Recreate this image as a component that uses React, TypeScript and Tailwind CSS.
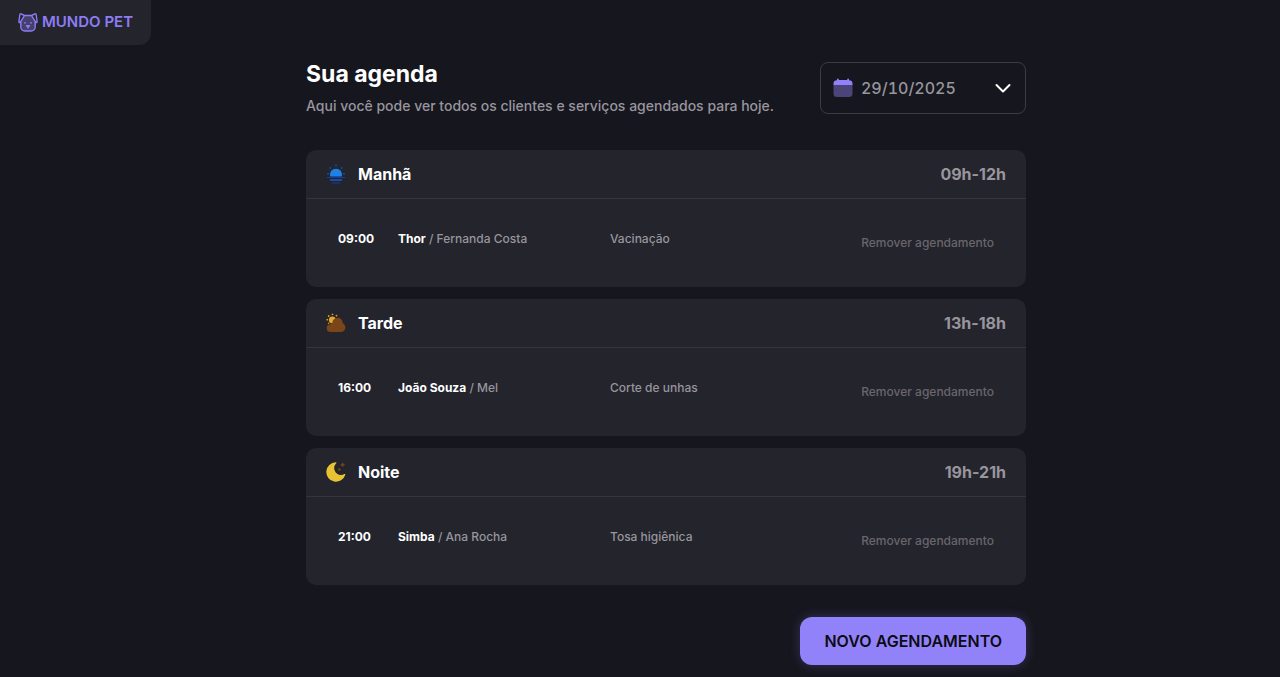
import React from "react";

type Appointment = { time: string; name: string; other: string; service: string };
type Period = { title: string; hours: string; icon: React.ReactNode; items: Appointment[] };

function DogIcon() {
  return (
    <svg viewBox="0 0 20 20" className="size-5" fill="none" stroke="#8e7cf5" strokeWidth="1.4" strokeLinejoin="round" strokeLinecap="round" aria-hidden="true">
      <path d="M6.500 2.500h7L17 8.500v5.500a4 4 0 0 1-4 4H7a4 4 0 0 1-4-4V8.500z" fill="#45416f" stroke="none" />
      <path d="M6.500 2.500h7M6.500 2.500 3 .9a.8.8 0 0 0-1.100.6L.9 8.500c-.1 1 .9 1.400 1.500.7zM13.500 2.500 17 .9a.8.8 0 0 1 1.100.6l1 7c.1 1-.9 1.400-1.500.7z" />
      <path d="M2.800 9v5a4 4 0 0 0 4 4h6.400a4 4 0 0 0 4-4V9M8.500 12.800h3L10 14.300zM10 14.300V15" />
      <circle cx="7" cy="9.800" r=".9" fill="#8e7cf5" stroke="none" />
      <circle cx="13" cy="9.800" r=".9" fill="#8e7cf5" stroke="none" />
    </svg>
  );
}

function CalendarIcon() {
  return (
    <svg viewBox="0 0 20 20" className="size-5" aria-hidden="true">
      <path d="M.5 7h19v8.500a3.500 3.500 0 0 1-3.500 3.500H4a3.500 3.500 0 0 1-3.500-3.500z" fill="#4a4578" />
      <path d="M.5 7V5.500A3.500 3.500 0 0 1 4 2.200V1.500a.8.8 0 0 1 1.800 0V2h8.400v-.5a.8.8 0 0 1 1.800 0v.7a3.500 3.500 0 0 1 3.500 3.300V7z" fill="#9282fa" />
    </svg>
  );
}

function SunriseIcon() {
  return (
    <svg viewBox="0 0 20 20" className="size-5" aria-hidden="true">
      <path d="M4.300 12.500a6 6 0 1 1 11.400 0z" fill="#1f80e8" />
      <path d="M.7 13.500h18.600M6 19h8" stroke="#173d8f" strokeWidth="1.200" />
      <path d="M4 16h12" stroke="#1a53dc" strokeWidth="1.600" />
      <g fill="#1a4a96">
        <circle cx="10" cy="1.500" r="1" />
        <circle cx="4.300" cy="4" r="1" />
        <circle cx="15.700" cy="4" r="1" />
        <circle cx="2" cy="9.700" r="1" />
        <circle cx="18" cy="9.700" r="1" />
      </g>
    </svg>
  );
}

function CloudIcon() {
  return (
    <svg viewBox="0 0 20 20" className="size-5" aria-hidden="true">
      <circle cx="6.300" cy="6.900" r="3.400" fill="#e4a72c" />
      <g fill="#d69a28">
        <circle cx="2.700" cy="3" r=".9" />
        <circle cx="6.500" cy="1.300" r=".9" />
        <circle cx="10.500" cy="2.700" r=".9" />
        <circle cx="1.300" cy="6.700" r=".9" />
        <circle cx="2.600" cy="10.200" r=".8" />
      </g>
      <path d="M4.700 19a3.900 3.900 0 0 1-.2-7.800c1 0 1.700-.6 1.900-1.600a5.100 5.100 0 0 1 10-1c.2 1 .3 1.500 1.200 2.200A4.600 4.600 0 0 1 14.700 19z" fill="#7a4518" />
    </svg>
  );
}

function MoonIcon() {
  return (
    <svg viewBox="0 0 20 20" className="size-5" aria-hidden="true">
      <path d="M9.800.3a9.700 9.700 0 1 0 9.500 12.400c.2-.7-.3-.9-.9-.6A6.800 6.800 0 0 1 10 1.600c.7-.7.6-1.300-.2-1.300z" fill="#e8c233" />
      <path d="m16.700.8.7 1.300 1.300.7-1.300.7-.7 1.300-.7-1.300-1.300-.7 1.300-.700zM13.300 6l.5 1 1 .5-1 .5-.5 1-.5-1-1-.5 1-.500z" fill="#7a4518" stroke="#7a4518" strokeWidth=".6" />
    </svg>
  );
}

const periods: Period[] = [
  { title: "Manhã", hours: "09h-12h", icon: <SunriseIcon />, items: [{ time: "09:00", name: "Thor", other: "Fernanda Costa", service: "Vacinação" }] },
  { title: "Tarde", hours: "13h-18h", icon: <CloudIcon />, items: [{ time: "16:00", name: "João Souza", other: "Mel", service: "Corte de unhas" }] },
  { title: "Noite", hours: "19h-21h", icon: <MoonIcon />, items: [{ time: "21:00", name: "Simba", other: "Ana Rocha", service: "Tosa higiênica" }] },
];

function PeriodCard({ period }: { period: Period }) {
  return (
    <section className="overflow-hidden rounded-[10px] bg-[#23242c]">
      <header className="flex items-center border-b border-[#353539] px-5 py-3">
        {period.icon}
        <h2 className="ml-3 text-base font-bold text-white">{period.title}</h2>
        <span className="ml-auto text-base font-bold text-[#98959d]">{period.hours}</span>
      </header>
      <ul>
        {period.items.map((item) => (
          <li key={item.time} className="flex min-h-[88px] items-start px-8 pt-8 text-xs leading-4 font-medium text-[#98959d]">
            <time className="w-[60px] font-bold text-white">{item.time}</time>
            <p className="w-[212px]">
              <strong className="font-bold text-white">{item.name}</strong> / {item.other}
            </p>
            <p>{item.service}</p>
            <button type="button" className="mt-1 ml-auto font-medium text-[#69666c]">
              Remover agendamento
            </button>
          </li>
        ))}
      </ul>
    </section>
  );
}

export default function App() {
  return (
    <div className="min-h-screen bg-[#16161e] font-['Inter',sans-serif]">
      <header className="flex">
        <a href="#" className="flex h-[45px] items-center gap-1 rounded-br-xl bg-[#23242c] pr-[18px] pl-[18px] text-[15px] font-semibold text-[#8e7cf5]">
          <DogIcon />
          MUNDO PET
        </a>
      </header>
      <main className="pl-[52px]">
        <div className="mx-auto max-w-[720px] pt-[13px] pb-3">
          <div className="flex items-start justify-between">
            <div>
              <h1 className="text-[23px] leading-8 font-bold text-white">Sua agenda</h1>
              <p className="mt-1.5 text-sm font-medium text-[#98959d]">Aqui você pode ver todos os clientes e serviços agendados para hoje.</p>
            </div>
            <label className="mt-1 flex h-[52px] w-[206px] items-center gap-2 rounded-lg border border-[#3e3c41] px-3">
              <CalendarIcon />
              <select aria-label="Data da agenda" className="min-w-0 flex-1 appearance-none bg-transparent text-base font-medium text-[#98959d] tabular-nums outline-none">
                <option>29/10/2025</option>
              </select>
              <svg viewBox="0 0 20 20" className="size-5" fill="none" stroke="white" strokeWidth="2" strokeLinecap="round" strokeLinejoin="round" aria-hidden="true">
                <path d="m3.500 7 6.500 6.500L16.500 7" />
              </svg>
            </label>
          </div>
          <div className="mt-[34px] flex flex-col gap-3">
            {periods.map((period) => (
              <PeriodCard key={period.title} period={period} />
            ))}
          </div>
          <div className="mt-8 flex justify-end">
            <button type="button" className="h-12 rounded-xl bg-[#9282fa] px-6 text-base font-semibold text-[#0c0c12] shadow-[0_0_12px_rgba(146,130,250,0.25)]">
              NOVO AGENDAMENTO
            </button>
          </div>
        </div>
      </main>
    </div>
  );
}
